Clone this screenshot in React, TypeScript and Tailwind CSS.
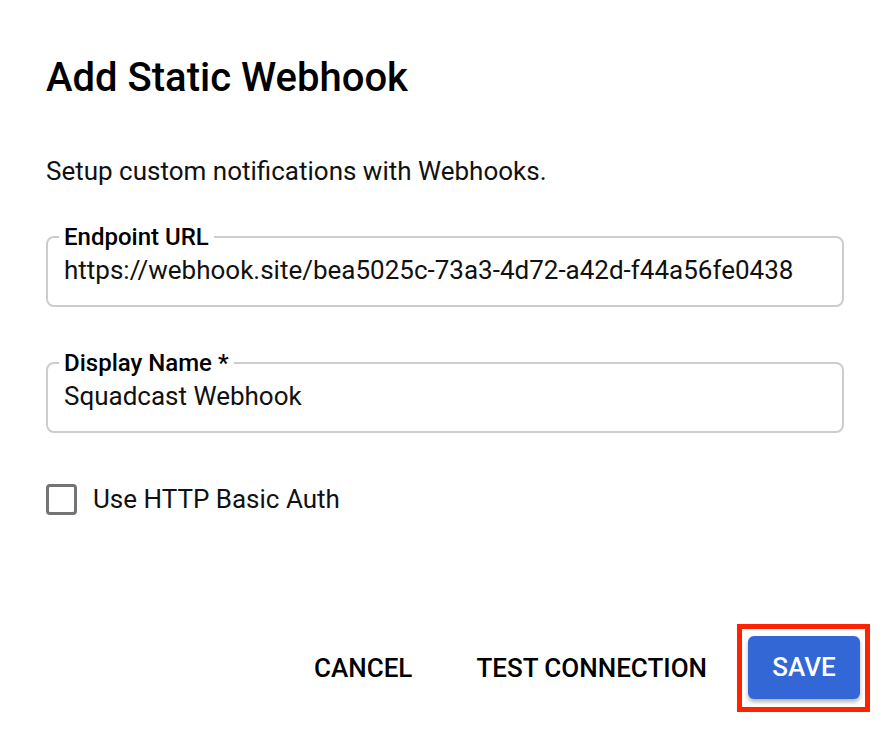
import React from "react";

function Field({ label, value, className }: { label: string; value: string; className?: string }) {
  return (
    <fieldset className={"border-2 border-[#cdcdcd] rounded-[8px] pl-[16px] pr-4 pb-[19px] " + (className ?? "")}>
      <legend className="px-[5px] -ml-[5px] text-[24px] font-medium leading-[28px] text-black">{label}</legend>
      <div className="text-[26px] leading-[32px] text-[#111] mt-[3px] whitespace-nowrap">{value}</div>
    </fieldset>
  );
}

export default function App() {
  return (
    <div className="w-[890px] h-[730px] bg-white font-['Roboto',sans-serif] text-black flex flex-col">
      <div className="px-[46px] flex flex-col flex-1">
        <h1 className="text-[40px] font-medium leading-[48px] mt-[54px]">Add Static Webhook</h1>
        <p className="text-[26px] leading-[32px] mt-[53px] text-[#111]">Setup custom notifications with Webhooks.</p>
        <Field className="mt-[36px]" label="Endpoint URL" value="https://webhook.site/bea5025c-73a3-4d72-a42d-f44a56fe0438" />
        <Field className="mt-[42px]" label="Display Name *" value="Squadcast Webhook" />
        <label className="flex items-center mt-[50px] gap-[16px] h-[32px]">
          <span className="w-[31px] h-[31px] border-[3px] border-[#747474] rounded-[4px] shrink-0" />
          <span className="text-[26px] leading-[32px] text-[#111]">Use HTTP Basic Auth</span>
        </label>
      </div>
      <div className="flex items-center justify-end pr-[20px] pb-[18px]">
        <button className="text-[26px] font-medium leading-[32px] uppercase text-black mr-[64px]">Cancel</button>
        <button className="text-[26px] font-medium leading-[32px] uppercase text-black mr-[30px]">Test Connection</button>
        <div className="border-[5px] border-[#ff2200] pl-[6px] pr-[5px] pt-[7px] pb-[8px]">
          <button className="w-[112px] h-[63px] rounded-[6px] bg-[#3367d6] text-white text-[26px] font-medium uppercase shadow-[0_3px_4px_rgba(0,0,0,0.3)]">Save</button>
        </div>
      </div>
    </div>
  );
}
